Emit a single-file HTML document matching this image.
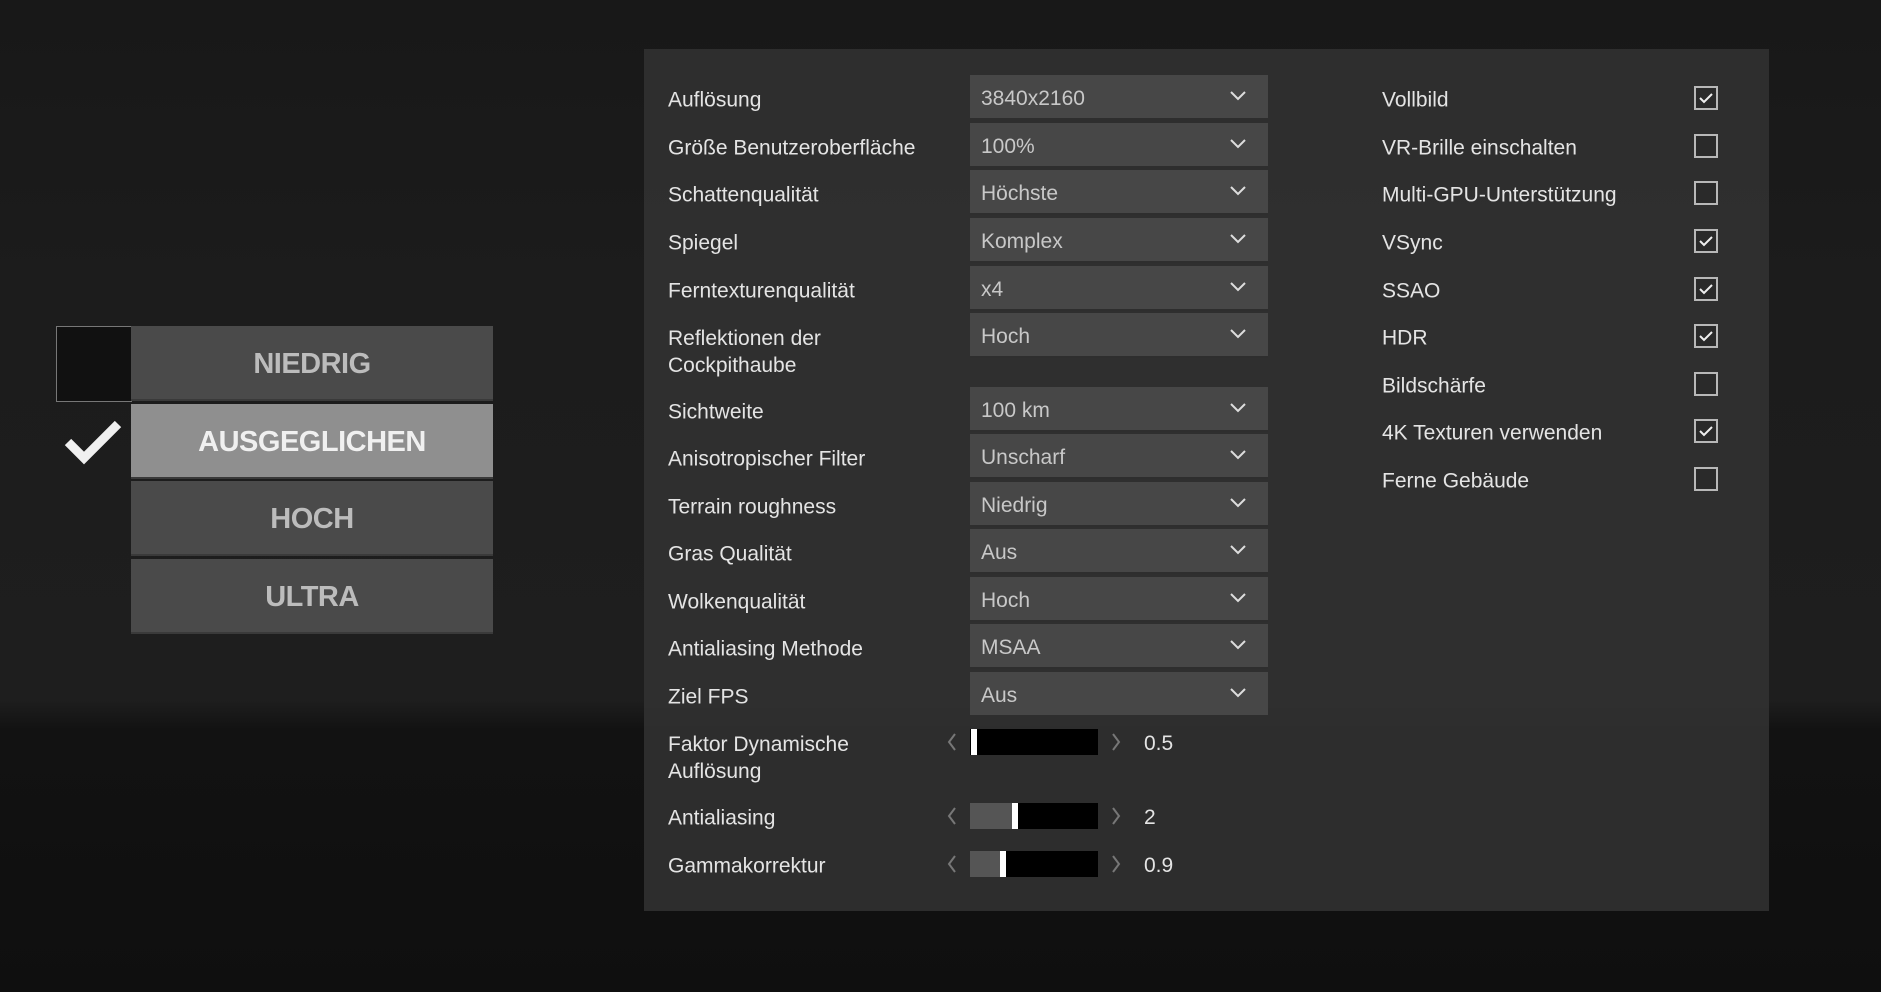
<!DOCTYPE html>
<html><head><meta charset="utf-8"><style>
*{margin:0;padding:0;box-sizing:border-box}
body{width:1881px;height:992px;overflow:hidden;position:relative;font-family:"Liberation Sans",sans-serif;
background:linear-gradient(180deg,#181818 0px,#1c1c1c 300px,#1e1e1e 700px,#121212 730px,#0f0f0f 992px);color:#e6e6e6}
.abs{position:absolute}
.panel{left:644px;top:49px;width:1125px;height:862px;background:rgba(50,50,50,0.85)}
.lbl{position:absolute;left:668px;font-size:21px;line-height:27px;color:#e4e4e4;transform:translateY(-50%);margin-top:2px}
.rl{left:1382px}
.dd{position:absolute;left:970px;width:298px;height:45px;background:#474747;border-bottom:2px solid #2e2e2e;font-size:21px;color:#c8c8c8;line-height:47px;padding-left:11px}
.dd svg{position:absolute;right:22px;top:16px}
.cb{position:absolute;left:1694px;width:24px;height:24px;border:2px solid #b8b8b8;background:#2a2a2a}
.cb svg{position:absolute;left:3px;top:4px}
.btn{position:absolute;left:131px;width:362px;height:75px;background:#4a4a4a;color:#bcbcbc;font-weight:bold;font-size:29px;letter-spacing:-0.5px;text-align:center;line-height:77px;border-bottom:2px solid #3a3a3a}
.bar{position:absolute;left:970px;width:128px;height:26px;background:#000}
.fill{position:absolute;left:0;top:0;height:26px;background:#555}
.th{position:absolute;top:0;width:6px;height:26px;background:#fff}
.val{position:absolute;left:1144px;font-size:21px;color:#e4e4e4;transform:translateY(-50%);margin-top:2px}
</style></head><body>
<div class="abs panel"></div>

<div class="abs" style="left:56px;top:326px;width:76px;height:76px;border:1px solid #777;border-right:none;background:#111"></div>
<div class="btn" style="top:326px">NIEDRIG</div>
<div class="btn" style="top:404px;background:#8f8f8f;color:#f0f0f0">AUSGEGLICHEN</div>
<div class="btn" style="top:481px">HOCH</div>
<div class="btn" style="top:559px">ULTRA</div>
<svg class="abs" style="left:62px;top:418px" width="62" height="48"><path d="M6 24 L22 40 L56 6" stroke="#f0f0f0" stroke-width="9" fill="none"/></svg>

<div class="lbl" style="top:98px">Auflösung</div>
<div class="lbl" style="top:146px">Größe Benutzeroberfläche</div>
<div class="lbl" style="top:193px">Schattenqualität</div>
<div class="lbl" style="top:241px">Spiegel</div>
<div class="lbl" style="top:289px">Ferntexturenqualität</div>
<div class="lbl" style="top:350px">Reflektionen der<br>Cockpithaube</div>
<div class="lbl" style="top:410px">Sichtweite</div>
<div class="lbl" style="top:457px">Anisotropischer Filter</div>
<div class="lbl" style="top:505px">Terrain roughness</div>
<div class="lbl" style="top:552px">Gras Qualität</div>
<div class="lbl" style="top:600px">Wolkenqualität</div>
<div class="lbl" style="top:647px">Antialiasing Methode</div>
<div class="lbl" style="top:695px">Ziel FPS</div>
<div class="lbl" style="top:756px">Faktor Dynamische<br>Auflösung</div>
<div class="lbl" style="top:816px">Antialiasing</div>
<div class="lbl" style="top:864px">Gammakorrektur</div>

<div class="dd" style="top:75px">3840x2160<svg width="16" height="10"><path d="M1 1 L8 8 L15 1" stroke="#ddd" stroke-width="2" fill="none"/></svg></div>
<div class="dd" style="top:123px">100%<svg width="16" height="10"><path d="M1 1 L8 8 L15 1" stroke="#ddd" stroke-width="2" fill="none"/></svg></div>
<div class="dd" style="top:170px">Höchste<svg width="16" height="10"><path d="M1 1 L8 8 L15 1" stroke="#ddd" stroke-width="2" fill="none"/></svg></div>
<div class="dd" style="top:218px">Komplex<svg width="16" height="10"><path d="M1 1 L8 8 L15 1" stroke="#ddd" stroke-width="2" fill="none"/></svg></div>
<div class="dd" style="top:266px">x4<svg width="16" height="10"><path d="M1 1 L8 8 L15 1" stroke="#ddd" stroke-width="2" fill="none"/></svg></div>
<div class="dd" style="top:313px">Hoch<svg width="16" height="10"><path d="M1 1 L8 8 L15 1" stroke="#ddd" stroke-width="2" fill="none"/></svg></div>
<div class="dd" style="top:387px">100 km<svg width="16" height="10"><path d="M1 1 L8 8 L15 1" stroke="#ddd" stroke-width="2" fill="none"/></svg></div>
<div class="dd" style="top:434px">Unscharf<svg width="16" height="10"><path d="M1 1 L8 8 L15 1" stroke="#ddd" stroke-width="2" fill="none"/></svg></div>
<div class="dd" style="top:482px">Niedrig<svg width="16" height="10"><path d="M1 1 L8 8 L15 1" stroke="#ddd" stroke-width="2" fill="none"/></svg></div>
<div class="dd" style="top:529px">Aus<svg width="16" height="10"><path d="M1 1 L8 8 L15 1" stroke="#ddd" stroke-width="2" fill="none"/></svg></div>
<div class="dd" style="top:577px">Hoch<svg width="16" height="10"><path d="M1 1 L8 8 L15 1" stroke="#ddd" stroke-width="2" fill="none"/></svg></div>
<div class="dd" style="top:624px">MSAA<svg width="16" height="10"><path d="M1 1 L8 8 L15 1" stroke="#ddd" stroke-width="2" fill="none"/></svg></div>
<div class="dd" style="top:672px">Aus<svg width="16" height="10"><path d="M1 1 L8 8 L15 1" stroke="#ddd" stroke-width="2" fill="none"/></svg></div>

<svg class="abs" style="left:946px;top:732px" width="12" height="20"><path d="M9 2 L3 10 L9 18" stroke="#777" stroke-width="2" fill="none"/></svg>
<div class="bar" style="top:729px"><div class="th" style="left:1px"></div></div>
<svg class="abs" style="left:1110px;top:732px" width="12" height="20"><path d="M3 2 L9 10 L3 18" stroke="#777" stroke-width="2" fill="none"/></svg>
<div class="val" style="top:742px">0.5</div>

<svg class="abs" style="left:946px;top:806px" width="12" height="20"><path d="M9 2 L3 10 L9 18" stroke="#777" stroke-width="2" fill="none"/></svg>
<div class="bar" style="top:803px"><div class="fill" style="width:42px"></div><div class="th" style="left:42px"></div></div>
<svg class="abs" style="left:1110px;top:806px" width="12" height="20"><path d="M3 2 L9 10 L3 18" stroke="#777" stroke-width="2" fill="none"/></svg>
<div class="val" style="top:816px">2</div>

<svg class="abs" style="left:946px;top:854px" width="12" height="20"><path d="M9 2 L3 10 L9 18" stroke="#777" stroke-width="2" fill="none"/></svg>
<div class="bar" style="top:851px"><div class="fill" style="width:30px"></div><div class="th" style="left:30px"></div></div>
<svg class="abs" style="left:1110px;top:854px" width="12" height="20"><path d="M3 2 L9 10 L3 18" stroke="#777" stroke-width="2" fill="none"/></svg>
<div class="val" style="top:864px">0.9</div>

<div class="lbl rl" style="top:98px">Vollbild</div>
<div class="lbl rl" style="top:146px">VR-Brille einschalten</div>
<div class="lbl rl" style="top:193px">Multi-GPU-Unterstützung</div>
<div class="lbl rl" style="top:241px">VSync</div>
<div class="lbl rl" style="top:289px">SSAO</div>
<div class="lbl rl" style="top:336px">HDR</div>
<div class="lbl rl" style="top:384px">Bildschärfe</div>
<div class="lbl rl" style="top:431px">4K Texturen verwenden</div>
<div class="lbl rl" style="top:479px">Ferne Gebäude</div>

<div class="cb" style="top:86px"><svg width="14" height="12"><path d="M1 6 L5 10 L13 2" stroke="#eee" stroke-width="2" fill="none"/></svg></div>
<div class="cb" style="top:134px"></div>
<div class="cb" style="top:181px"></div>
<div class="cb" style="top:229px"><svg width="14" height="12"><path d="M1 6 L5 10 L13 2" stroke="#eee" stroke-width="2" fill="none"/></svg></div>
<div class="cb" style="top:277px"><svg width="14" height="12"><path d="M1 6 L5 10 L13 2" stroke="#eee" stroke-width="2" fill="none"/></svg></div>
<div class="cb" style="top:324px"><svg width="14" height="12"><path d="M1 6 L5 10 L13 2" stroke="#eee" stroke-width="2" fill="none"/></svg></div>
<div class="cb" style="top:372px"></div>
<div class="cb" style="top:419px"><svg width="14" height="12"><path d="M1 6 L5 10 L13 2" stroke="#eee" stroke-width="2" fill="none"/></svg></div>
<div class="cb" style="top:467px"></div>
</body></html>
